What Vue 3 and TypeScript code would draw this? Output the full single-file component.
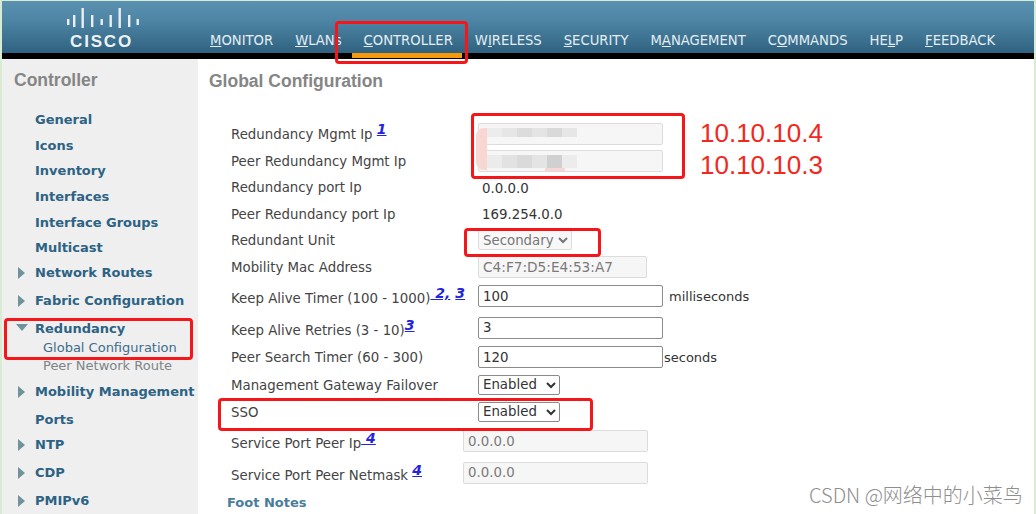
<script setup lang="ts">
const nav = [
  { pre: '', u: 'M', post: 'ONITOR', cls: 'n1' },
  { pre: '', u: 'W', post: 'LANs', cls: 'n2' },
  { pre: '', u: 'C', post: 'ONTROLLER', cls: 'n3' },
  { pre: 'W', u: 'I', post: 'RELESS', cls: 'n4' },
  { pre: '', u: 'S', post: 'ECURITY', cls: 'n5' },
  { pre: 'M', u: 'A', post: 'NAGEMENT', cls: 'n6' },
  { pre: 'C', u: 'O', post: 'MMANDS', cls: 'n7' },
  { pre: 'HE', u: 'L', post: 'P', cls: 'n8' },
  { pre: '', u: 'F', post: 'EEDBACK', cls: 'n9' },
]
const side = [
  { t: 'General', k: 'item' },
  { t: 'Icons', k: 'item' },
  { t: 'Inventory', k: 'item' },
  { t: 'Interfaces', k: 'item' },
  { t: 'Interface Groups', k: 'item' },
  { t: 'Multicast', k: 'item' },
  { t: 'Network Routes', k: 'item closed' },
  { t: 'Fabric Configuration', k: 'item closed' },
  { t: 'Redundancy', k: 'item open' },
  { t: 'Global Configuration', k: 'sub active' },
  { t: 'Peer Network Route', k: 'sub' },
  { t: 'Mobility Management', k: 'item closed' },
  { t: 'Ports', k: 'item' },
  { t: 'NTP', k: 'item closed' },
  { t: 'CDP', k: 'item closed' },
  { t: 'PMIPv6', k: 'item closed' },
]
const bars = [
  { x: 65, y: 19, h: 6 }, { x: 71, y: 15, h: 12 }, { x: 79.5, y: 8, h: 20 }, { x: 89, y: 15, h: 12 }, { x: 98.5, y: 19, h: 6 },
  { x: 107.5, y: 15, h: 12 }, { x: 116.5, y: 8, h: 20 }, { x: 126, y: 15, h: 12 }, { x: 134.5, y: 19, h: 6 },
]
</script>

<template>
  <div class="page">
    <header class="top">
      <div class="logo">
        <svg class="bars" width="80" height="22" viewBox="60 7 80 22">
          <rect v-for="b in bars" :key="b.x" :x="b.x" :y="b.y" width="2.4" :height="b.h" fill="#e8f0f4" />
        </svg>
        <span class="cisco">CISCO</span>
      </div>
      <nav class="nav">
        <a v-for="n in nav" :key="n.cls" :class="['nav-item', n.cls]">{{ n.pre }}<u>{{ n.u }}</u>{{ n.post }}</a>
      </nav>
    </header>
    <div class="rule"><span class="tab"></span></div>
    <div class="body">
      <aside class="side">
        <h2 class="side-title">Controller</h2>
        <ul class="menu">
          <li v-for="s in side" :key="s.t" :class="s.k">{{ s.t }}</li>
        </ul>
      </aside>
      <main class="main">
        <h1 class="title">Global Configuration</h1>
        <div class="form">
          <label>Redundancy Mgmt Ip <sup>1</sup></label>
          <div class="ctl in"><input class="wide off" disabled value="" /></div>

          <label>Peer Redundancy Mgmt Ip</label>
          <div class="ctl in"><input class="wide off" disabled value="" /></div>

          <label>Redundancy port Ip</label>
          <div class="ctl in val">0.0.0.0</div>

          <label>Peer Redundancy port Ip</label>
          <div class="ctl in val">169.254.0.0</div>

          <label>Redundant Unit</label>
          <div class="ctl in"><select class="sel-sec" disabled><option>Secondary</option></select></div>

          <label>Mobility Mac Address</label>
          <div class="ctl in"><input class="mac off" disabled value="C4:F7:D5:E4:53:A7" /></div>

          <label class="lift">Keep Alive Timer (100 - 1000)<sup>&nbsp;2,</sup><span class="gap"></span><sup>3</sup></label>
          <div class="ctl in"><input class="wide" value="100" /><span class="unit far">milliseconds</span></div>

          <label class="lift">Keep Alive Retries (3 - 10)<sup>3</sup></label>
          <div class="ctl in"><input class="wide" value="3" /></div>

          <label>Peer Search Timer (60 - 300)</label>
          <div class="ctl in"><input class="wide" value="120" /><span class="unit">seconds</span></div>

          <label>Management Gateway Failover</label>
          <div class="ctl in"><select class="sel-en"><option>Enabled</option></select></div>

          <label>SSO</label>
          <div class="ctl in"><select class="sel-en"><option>Enabled</option></select></div>

          <label class="lift">Service Port Peer Ip<sup>&nbsp;4</sup></label>
          <div class="ctl"><input class="mac2 off" disabled value="0.0.0.0" /></div>

          <label class="lift">Service Port Peer Netmask <sup>4</sup></label>
          <div class="ctl"><input class="mac2 off" disabled value="0.0.0.0" /></div>
        </div>
        <div class="foot">Foot Notes</div>
      </main>
    </div>

    <!-- annotations drawn over the screenshot -->
    <div class="smear s1"></div>
    <div class="smear s2"></div>
    <div class="blur b1"></div>
    <div class="blur b2"></div>
    <div class="mark m-nav"></div>
    <div class="mark m-ip"></div>
    <div class="mark m-unit"></div>
    <div class="mark m-red"></div>
    <div class="mark m-sso"></div>
    <div class="note n-a">10.10.10.4</div>
    <div class="note n-b">10.10.10.3</div>
    <div class="wm">CSDN @网络中的小菜鸟</div>
  </div>
</template>

<style>
html, body { margin: 0; padding: 0; background: #fff; }
</style>

<style scoped>
.page {
  position: relative;
  width: 1036px;
  height: 514px;
  overflow: hidden;
  box-sizing: border-box;
  padding: 1px 2px 0 2px;
  background: #d8ecd4;
  font-family: "DejaVu Sans", Verdana, sans-serif;
  font-size: 13.33px;
  color: #333;
}
.top {
  height: 52px;
  display: flex;
  background: linear-gradient(#5a91b0 0%, #4f86a6 35%, #2f6280 100%);
}
.logo {
  width: 196px;
  flex: none;
  display: flex;
  flex-direction: column;
  align-items: center;
  padding-top: 6px;
  box-sizing: border-box;
}
.bars { display: block; margin-left: 3px; }
.cisco {
  font-family: "Liberation Sans", Arial, sans-serif;
  font-weight: 700;
  font-size: 17px;
  letter-spacing: 1.8px;
  line-height: 16px;
  margin: 5px 0 0 3px;
  color: #eef3f6;
}
.nav {
  display: flex;
  align-items: flex-end;
  padding-left: 12px;
  padding-bottom: 4px;
  box-sizing: border-box;
}
.nav-item {
  color: #e4eef4;
  font-size: 13.2px;
  line-height: 16px;
  white-space: nowrap;
  margin-right: 22px;
}
.rule {
  height: 6px;
  background: #000;
  position: relative;
}
.tab {
  position: absolute;
  left: 350px;
  width: 110px;
  top: 0;
  height: 5px;
  background: #f59a0c;
}
.body { display: flex; height: 455px; background: #fff; }
.side { width: 196px; background: #efefef; flex: none; overflow: hidden; }
.side-title {
  margin: 0;
  padding: 11px 0 0 12px;
  font: 700 17.5px/20px "Liberation Sans", Arial, sans-serif;
  color: #858585;
}
.menu {
  list-style: none;
  margin: 17px 0 0;
  padding: 0 0 0 33px;
  display: grid;
  grid-template-rows: 26px 26px 24px 28px 24px 26px 24px 32px 24px 14px 22px 30px 26px 24px 32px 24px;
  align-items: center;
}
.menu li { white-space: nowrap; position: relative; }
.item { font-weight: 700; font-size: 13px; line-height: 16px; color: #2c6384; }
.sub { font-size: 13px; line-height: 16px; color: #7d8488; padding-left: 8px; }
.sub.active { color: #3b6d8c; }
.closed::before {
  content: "";
  position: absolute;
  left: -17px;
  top: 2px;
  border-left: 7px solid #70929a;
  border-top: 6px solid transparent;
  border-bottom: 6px solid transparent;
}
.open::before {
  content: "";
  position: absolute;
  left: -19px;
  top: 3px;
  border-top: 7px solid #70929a;
  border-left: 6px solid transparent;
  border-right: 6px solid transparent;
}
.main { flex: 1; padding-left: 11px; min-width: 0; }
.title {
  margin: 0;
  padding-top: 12px;
  font: 700 17.5px/20px "Liberation Sans", Arial, sans-serif;
  color: #858585;
}
.form {
  margin-top: 29px;
  padding-left: 22px;
  display: grid;
  grid-template-columns: 232px auto;
  grid-template-rows: 27px 27px 26px 27px 26px 27px 32px 31px 28px 27px 27px 32px 31px;
  align-items: center;
  justify-content: start;
}
label { white-space: nowrap; color: #444; line-height: 16px; padding-top: 2px; }
label.lift { padding-top: 6px; }
sup {
  font: italic 700 14px/0 "DejaVu Sans", Verdana, sans-serif;
  color: #2323e0;
  text-decoration: underline;
  vertical-align: 5px;
}
.gap { display: inline-block; width: 5px; }
.ctl { display: flex; align-items: center; white-space: nowrap; }
.in { padding-left: 15px; }
.val { padding-left: 19px; padding-top: 2px; color: #333; }
input, select {
  box-sizing: border-box;
  font-family: "DejaVu Sans", Verdana, sans-serif;
  font-size: 13.33px;
  margin: 0;
  color: #333;
}
input {
  height: 22px;
  border: 1px solid #8a8a8a;
  border-radius: 2px;
  padding: 0 4px;
  background: #fff;
  outline: none;
}
.off { background: #f6f6f6; border-color: #dcdcdc; color: #7a7a7a; }
.wide { width: 185px; }
.mac { width: 169px; font-size: 13.7px; }
.mac2 { width: 185px; }
select { height: 20px; background: #fff; border: 1px solid #8a8a8a; border-radius: 2px; }
.sel-en { width: 82px; }
.sel-sec { width: 94px; color: #777; border-color: #dcdcdc; background: #f8f8f8; opacity: 1; }
.unit { margin-left: 1px; color: #333; font-size: 13px; }
.far { margin-left: 6px; }
.foot {
  margin: 7px 0 0 18px;
  font-weight: 700;
  font-size: 13px;
  color: #4a7d9c;
}
.mark {
  position: absolute;
  border: 3px solid #f5161a;
  border-radius: 4px;
  box-sizing: border-box;
}
.m-nav { left: 335px; top: 21px; width: 133px; height: 43px; }
.m-ip { left: 471px; top: 113px; width: 214px; height: 66px; }
.m-unit { left: 464px; top: 228px; width: 137px; height: 29px; }
.m-red { left: 4px; top: 318px; width: 189px; height: 42px; }
.m-sso { left: 218px; top: 398px; width: 375px; height: 33px; }
.smear {
  position: absolute;
  background: #f8d6d2;
}
.s1 { left: 476px; top: 128px; width: 11px; height: 42px; border-radius: 8px 0 0 8px; }
.s2 { left: 545px; top: 168px; width: 20px; height: 3px; }
.blur {
  position: absolute;
  left: 487px;
  width: 90px;
}
.b1 {
  top: 128px;
  height: 9px;
  background: linear-gradient(90deg, #ececec 0 15px, #e6e6e6 15px 30px, #dcdcdc 30px 45px, #e4e4e4 45px 60px, #d9d9d9 60px 75px, #e6e6e6 75px 90px);
}
.b2 {
  top: 155px;
  height: 13px;
  background: linear-gradient(90deg, #ebebeb 0 15px, #e2e2e2 15px 30px, #dadada 30px 45px, #e4e4e4 45px 60px, #d0d0d0 60px 75px, #ececec 75px 90px);
}
.note {
  position: absolute;
  left: 700px;
  font: 400 26px/32px "Liberation Sans", Arial, sans-serif;
  color: #f0281e;
}
.n-a { top: 117px; }
.n-b { top: 149px; }
.wm {
  position: absolute;
  left: 809px;
  top: 483px;
  font: 300 20px/24px "Noto Sans CJK SC", "Noto Sans", sans-serif;
  color: #8e8e8e;
  white-space: nowrap;
}
</style>
